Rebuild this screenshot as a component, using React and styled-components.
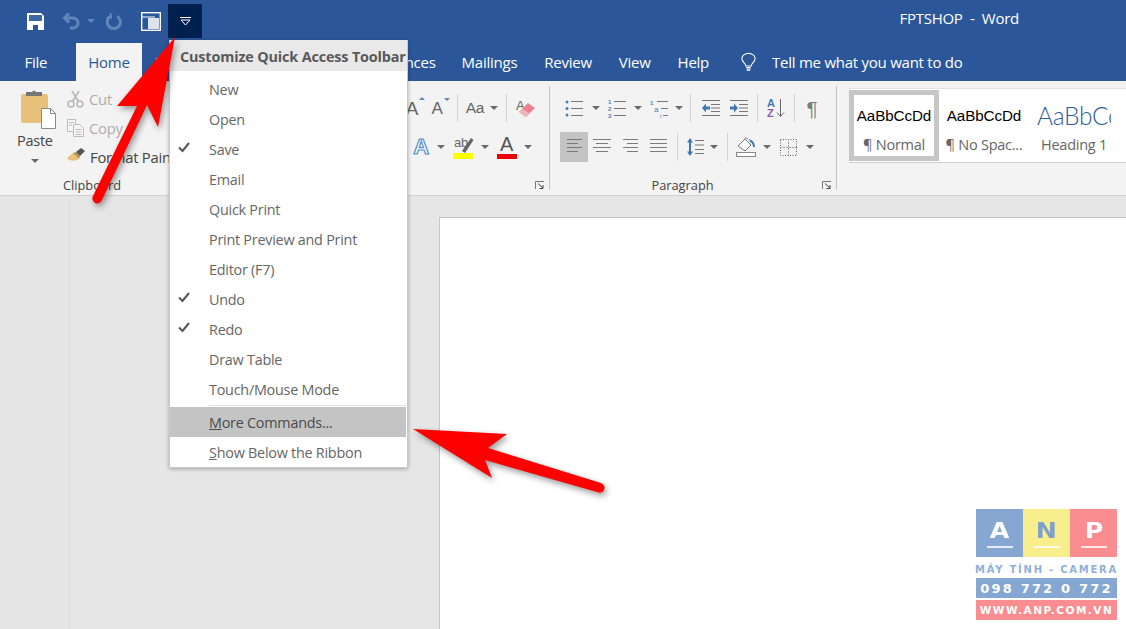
import React from 'react';
import styled, { createGlobalStyle } from 'styled-components';

const GlobalStyle = createGlobalStyle`
  html, body { margin: 0; padding: 0; background: #e6e6e6; }
  * { box-sizing: border-box; }
`;

const blue = '#2b579a';
const font = `"Open Sans", "Noto Sans", sans-serif`;

const Frame = styled.div`
  position: relative;
  width: 1126px;
  height: 629px;
  overflow: hidden;
  display: flex;
  flex-direction: column;
  font-family: ${font};
  letter-spacing: -0.25px;
  color: #555;
`;

const TitleBar = styled.div`
  height: 42px;
  flex: none;
  background: ${blue};
  display: flex;
  align-items: flex-start;
  padding: 4px 0 0 16px;
`;

const QatButton = styled.div`
  height: 34px;
  width: ${p => p.$w}px;
  display: flex;
  align-items: center;
  justify-content: center;
  background: ${p => (p.$active ? '#002050' : 'transparent')};
`;

const QatCaret = styled.i`
  display: block;
  border-left: 4px solid transparent;
  border-right: 4px solid transparent;
  border-top: 4px solid #6485b8;
`;

const DocTitle = styled.div`
  margin-left: auto;
  margin-right: 107px;
  margin-top: 4px;
  color: #fff;
  font-size: 15px;
  white-space: pre;
`;

const TabBar = styled.div`
  height: 39px;
  flex: none;
  background: ${blue};
  display: flex;
  align-items: stretch;
  padding-left: 11px;
`;

const Tab = styled.div`
  padding: 0 ${p => p.$pad || 13.5}px;
  margin-left: ${p => p.$ml || 0}px;
  margin-top: ${p => (p.$active ? 1 : 0)}px;
  display: flex;
  align-items: center;
  font-size: 15px;
  color: ${p => (p.$active ? blue : '#fff')};
  background: ${p => (p.$active ? '#f3f3f3' : 'transparent')};
`;

const TellMe = styled.div`
  margin-left: 18.5px;
  display: flex;
  align-items: center;
  gap: 16px;
  color: #fff;
  font-size: 15px;
`;

const Ribbon = styled.div`
  height: 115px;
  flex: none;
  background: #f3f3f3;
  border-bottom: 1px solid #d2d2d2;
  display: flex;
`;

const Group = styled.div`
  width: ${p => p.$w}px;
  flex: none;
  display: flex;
  flex-direction: column;
`;

const GroupBody = styled.div`
  height: 94px;
  display: flex;
  flex-direction: ${p => (p.$rows ? 'column' : 'row')};
  align-items: ${p => (p.$end ? 'flex-end' : 'flex-start')};
  padding: ${p => p.$pad || '0'};
  gap: ${p => (p.$rows ? '9px' : '0')};
`;

const GroupFooter = styled.div`
  height: 20px;
  display: grid;
  grid-template-columns: 1fr auto 1fr;
  align-items: center;
  font-size: 12.8px;
  color: #444;
  letter-spacing: 0;
  padding-right: 4px;
`;

const GroupLabel = styled.span`
  grid-column: 2;
  margin-left: ${p => p.$ml || 0}px;
  margin-right: ${p => p.$mr || 0}px;
`;

const Launcher = styled.div`
  grid-column: 3;
  justify-self: end;
  display: flex;
`;

const GroupRule = styled.div`
  width: 1px;
  flex: none;
  height: 104px;
  margin-top: 5px;
  background: #c6c6c6;
`;

const PasteButton = styled.div`
  width: 56px;
  padding: 8px 0 0 21px;
  display: flex;
  flex-direction: column;
  align-items: flex-start;
  font-size: 14.5px;
  color: #444;
`;

const PasteLabel = styled.div`
  margin: 2px 0 8px -4px;
  line-height: 20px;
`;

const PasteCaret = styled.div`
  margin-left: 10px;
`;

const SmallColumn = styled.div`
  padding-top: 3px;
  padding-left: 11px;
  display: flex;
  flex-direction: column;
`;

const SmallItem = styled.div`
  height: 29px;
  display: flex;
  align-items: center;
  gap: 5px;
  white-space: nowrap;
  font-size: 14.8px;
  color: ${p => (p.$off ? '#adadad' : '#444')};
`;

const ToolRow = styled.div`
  height: 30px;
  display: flex;
  align-items: center;
`;

const Cell = styled.div`
  width: ${p => p.$w}px;
  height: 30px;
  flex: none;
  display: flex;
  align-items: center;
  justify-content: center;
  background: ${p => (p.$active ? '#c4c4c4' : 'transparent')};
`;

const Caret = styled.i`
  display: block;
  width: 0;
  height: 0;
  border-left: 4px solid transparent;
  border-right: 4px solid transparent;
  border-top: 4px solid #6a6a6a;
`;

const Rule = styled.div`
  width: 1px;
  height: ${p => p.$h || 28}px;
  flex: none;
  background: #d2d2d2;
`;

const Spacer = styled.div`
  width: ${p => p.$w}px;
  flex: none;
  display: flex;
  justify-content: center;
`;

const LetterBox = styled.div`
  position: relative;
  font-family: "Liberation Sans", sans-serif;
  font-size: ${p => p.$size || 18}px;
  color: #666;
  line-height: 1;
`;

const GrowMark = styled.span`
  position: absolute;
  top: -2px;
  right: -7px;
  width: 0;
  height: 0;
  border-left: 3.5px solid transparent;
  border-right: 3.5px solid transparent;
  ${p => (p.$down
    ? 'border-top: 3.5px solid #5b87b5;'
    : 'border-bottom: 3.5px solid #5b87b5;')}
`;

const EffectA = styled.div`
  font-family: "Liberation Sans", sans-serif;
  font-size: 22px;
  font-weight: 700;
  color: #fff;
  -webkit-text-stroke: 1.2px #4f8fca;
  line-height: 1;
`;

const ColorA = styled.div`
  display: flex;
  flex-direction: column;
  align-items: center;
  font-family: "Liberation Sans", sans-serif;
  font-size: 20px;
  color: #555;
  line-height: 17px;
`;

const ColorBar = styled.div`
  width: ${p => p.$w || 20}px;
  height: 5px;
  margin-top: 1px;
  background: ${p => p.$c};
`;

const Pilcrow = styled.div`
  font-family: "Liberation Sans", sans-serif;
  font-size: 21px;
  color: #7d7d7d;
  line-height: 1;
`;

const Gallery = styled.div`
  margin: 7px 0 0 12px;
  flex: 1;
  height: 75px;
  background: #fff;
  border-top: 1px solid #e2e2e2;
  border-bottom: 1px solid #cfcfcf;
  display: flex;
  overflow: hidden;
`;

const StyleCard = styled.div`
  width: 90px;
  height: 71px;
  margin-top: 1px;
  flex: none;
  display: flex;
  flex-direction: column;
  align-items: center;
  border: 5px solid ${p => (p.$selected ? '#c6c6c6' : 'transparent')};
`;

const StyleSample = styled.div`
  height: 36px;
  margin: 2px 0 2px;
  display: flex;
  align-items: center;
  width: 100%;
  justify-content: center;
  white-space: nowrap;
  overflow: hidden;
  font-family: ${p => (p.$big ? 'Lato, sans-serif' : '"Liberation Sans", sans-serif')};
  font-weight: ${p => (p.$big ? 300 : 400)};
  font-size: ${p => (p.$big ? 24.5 : 15.2)}px;
  color: ${p => (p.$big ? '#2f5c9a' : '#000')};
  letter-spacing: ${p => (p.$big ? '-0.3px' : '-0.1px')};
`;

const HeadingClip = styled.span`
  display: block;
  width: 74px;
  overflow: hidden;
`;

const StyleName = styled.div`
  font-size: 14.5px;
  line-height: 20px;
  color: #666;
  white-space: nowrap;
`;

const Workspace = styled.div`
  flex: 1;
  display: flex;
  background: #e6e6e6;
`;

const LeftStrip = styled.div`
  width: 70px;
  flex: none;
  background: #e5e5e5;
  border-right: 1px solid #dfdfdf;
`;

const Page = styled.div`
  flex: 1;
  margin: 21px 0 0 369px;
  background: #fff;
  border-left: 1px solid #c6c6c6;
  border-top: 1px solid #c6c6c6;
`;

const Menu = styled.div`
  position: absolute;
  left: 169px;
  top: 40px;
  width: 239px;
  height: 428px;
  background: #fff;
  border: 1px solid #c8c8c8;
  border-top: 0;
  box-shadow: 0 1px 4px rgba(0, 0, 0, 0.3);
`;

const MenuHeader = styled.div`
  height: 31px;
  margin-bottom: 4px;
  padding: 2px 0 0 10px;
  display: flex;
  align-items: center;
  background: #e9e9e9;
  font-size: 14.4px;
  font-weight: 700;
  color: #595959;
  white-space: nowrap;
  letter-spacing: -0.15px;
`;

const MenuItem = styled.div`
  height: 30px;
  margin-right: 1px;
  padding-bottom: ${p => (p.$low ? 0 : 2)}px;
  display: flex;
  align-items: center;
  font-size: 14.4px;
  white-space: nowrap;
  color: ${p => (p.$hot ? '#4a4a4a' : '#666')};
  background: ${p => (p.$hot ? '#c4c4c4' : 'transparent')};
`;

const CheckSlot = styled.div`
  width: 39px;
  flex: none;
  padding: 0 0 3px 8px;
  display: flex;
`;

const MenuRule = styled.div`
  height: 1px;
  margin: 0 1px 1px 39px;
  background: #e2e2e2;
`;

const ArrowLayer = styled.svg`
  position: absolute;
  left: 0;
  top: 0;
  pointer-events: none;
  filter: drop-shadow(2px 3px 3px rgba(0, 0, 0, 0.4));
`;

const Watermark = styled.div`
  position: absolute;
  left: 976px;
  top: 509px;
  width: 141px;
  display: flex;
  flex-direction: column;
  font-family: "DejaVu Sans", sans-serif;
  font-weight: 700;
`;

const Tiles = styled.div`
  display: flex;
  height: 48px;
`;

const Tile = styled.div`
  flex: 1;
  display: flex;
  flex-direction: column;
  align-items: center;
  justify-content: flex-end;
  padding-bottom: 9px;
  background: ${p => p.$bg};
  color: ${p => p.$c};
  font-size: 22px;
  line-height: 24px;
  &::after {
    content: '';
    width: 26px;
    height: 2px;
    margin-top: 3px;
    background: #fff;
    opacity: 0.8;
  }
`;

const TileLetter = styled.span`
  display: block;
  transform: scaleX(1.15);
`;

const Tagline = styled.div`
  height: 21px;
  padding-top: 3px;
  display: flex;
  align-items: center;
  justify-content: center;
  font-size: 10px;
  letter-spacing: 1.75px;
  color: #8fb0d8;
  white-space: nowrap;
`;

const Strip = styled.div`
  height: ${p => p.$h}px;
  margin-bottom: 2px;
  display: flex;
  align-items: center;
  justify-content: center;
  background: ${p => p.$bg};
  color: #fff;
  white-space: nowrap;
  font-size: ${p => p.$size}px;
  letter-spacing: ${p => p.$sp}px;
`;

const SaveIcon = () => (
  <svg width="17" height="17" viewBox="0 0 17 17">
    <path d="M0 0h14l3 3v14H0z" fill="#fff" />
    <rect x="2" y="2" width="13" height="6" fill="#3d67a6" />
    <rect x="6" y="12" width="5" height="5" fill="#2b579a" />
  </svg>
);

const UndoIcon = () => (
  <svg width="18" height="18" viewBox="0 0 18 18" fill="none" stroke="#6485b8" strokeWidth="3">
    <path d="M7 1.5 2.5 6 7 10.5" />
    <path d="M3 6h8a4.7 4.7 0 0 1 0 10H8" />
  </svg>
);

const RedoIcon = () => (
  <svg width="17" height="17" viewBox="0 0 17 17" fill="none" stroke="#6485b8" strokeWidth="3">
    <path d="M11 3.2A6.6 6.6 0 1 1 5 3" />
    <path d="M4.5 0 5 4.5 0.5 5" strokeWidth="2" />
  </svg>
);

const ViewIcon = () => (
  <svg width="20" height="19" viewBox="0 0 20 19" fill="none">
    <rect x="0.7" y="0.7" width="18.6" height="17.6" stroke="#fff" strokeWidth="1.4" />
    <path d="M1 5h13" stroke="#fff" />
    <rect x="7" y="6" width="11" height="11" fill="#dde3ee" />
  </svg>
);

const CustomizeIcon = () => (
  <svg width="11" height="9" viewBox="0 0 11 9" fill="none" stroke="#fff">
    <path d="M0 .5h11" />
    <path d="M1 3h9L5.500 8z" />
  </svg>
);

const BulbIcon = () => (
  <svg width="15" height="20" viewBox="0 0 17 21" fill="none" stroke="#fff" strokeWidth="1.2">
    <path d="M5.5 15c0-3-4.500-4.500-4.500-8.500a7.500 5.800 0 0 1 15 0c0 4-4.500 5.500-4.500 8.500z" />
    <path d="M6 17h5M6.500 19.500h4" strokeWidth="1.600" />
  </svg>
);

const PasteIcon = () => (
  <svg width="36" height="40" viewBox="0 0 36 40">
    <rect x="0" y="5" width="27" height="29" rx="2" fill="#e8c27a" />
    <path d="M5 7V3h6q2-3 4 0h6v4z" fill="#777" />
    <path d="M20.500 19.500h9l5 5v15h-14z" fill="#fff" stroke="#8a8a8a" />
    <path d="M29.500 19.500v5h5" fill="none" stroke="#8a8a8a" />
  </svg>
);

const CutIcon = () => (
  <svg width="17" height="18" viewBox="0 0 17 18" fill="none" stroke="#b9b9b9" strokeWidth="1.600">
    <circle cx="4" cy="14" r="3" />
    <circle cx="13" cy="14" r="3" />
    <path d="M5.500 11.500 12 1M11.500 11.500 5 1" />
  </svg>
);

const CopyIcon = () => (
  <svg width="17" height="18" viewBox="0 0 17 18" fill="#f6f6f6" stroke="#bcbcbc">
    <path d="M.5.500h8v12h-8z" />
    <path d="M6.500 5.500h6l4 4v8h-10z" />
    <path d="M2 3.500h5M2 6h3M8.500 10.500h6M8.500 13h6M8.500 15.500h6" fill="none" />
  </svg>
);

const BrushIcon = () => (
  <svg width="18" height="17" viewBox="0 0 18 17">
    <path d="M0 10 6 5l6 6c-3 2-9 3-12-1z" fill="#e8c27a" />
    <path d="M6 5l3-1 4 4-1 3z" fill="#b89048" />
    <path d="M9 4l5-4 4 3-5 5z" fill="#555" />
  </svg>
);

const LauncherIcon = () => (
  <svg width="10" height="9" viewBox="0 0 10 9" fill="none" stroke="#777">
    <path d="M.5 8V.5H9" />
    <path d="M3 2.500 8 7M8 4v3.500H4.500" stroke="#444" />
  </svg>
);

const EraserIcon = () => (
  <svg width="20" height="20" viewBox="0 0 20 20">
    <text x="0" y="12" fontFamily="Liberation Sans, sans-serif" fontSize="13" fill="#666">A</text>
    <path d="M3 14 12 5l7 5-9 9z" fill="#e98392" />
    <path d="M3 14l3.500-3.500 7 5L10 19z" fill="#f1b3bb" />
  </svg>
);

const HighlightIcon = () => (
  <svg width="21" height="26" viewBox="0 0 21 26">
    <text x="1" y="13" fontFamily="Liberation Sans, sans-serif" fontSize="13" fill="#666">ab</text>
    <path d="M9 17 18 4l2.500 2L12 19z" fill="#666" />
    <rect x="0" y="19" width="20" height="6" fill="#ffff00" />
  </svg>
);

const Lines = ({ w = 18, rows, color = '#7a7a7a' }) => (
  <svg width={w} height={rows.length * 4 + 1} viewBox={`0 0 ${w} ${rows.length * 4 + 1}`} stroke={color}>
    {rows.map(([a, b], i) => (
      <path key={i} d={`M${a} ${i * 4 + 0.5}H${b}`} />
    ))}
  </svg>
);

const BulletIcon = () => (
  <svg width="18" height="19" viewBox="0 0 18 19">
    <g fill="#4d7fae">
      <circle cx="2" cy="3" r="1.500" />
      <circle cx="2" cy="9.500" r="1.500" />
      <circle cx="2" cy="16" r="1.500" />
    </g>
    <path d="M6 2.500h12M6 9.500h12M6 16.500h12" stroke="#777" />
  </svg>
);

const NumberIcon = () => (
  <svg width="18" height="19" viewBox="0 0 18 19">
    <g fontFamily="Liberation Sans, sans-serif" fontSize="6" fontWeight="700" fill="#4d7fae">
      <text x="0" y="5">1</text>
      <text x="0" y="12">2</text>
      <text x="0" y="18.500">3</text>
    </g>
    <path d="M6 2.500h12M6 9.500h12M6 16.500h12" stroke="#777" />
  </svg>
);

const MultiIcon = () => (
  <svg width="18" height="19" viewBox="0 0 18 19">
    <g fontFamily="Liberation Sans, sans-serif" fill="#4d7fae">
      <text x="0" y="5.500" fontSize="6" fontWeight="700">1</text>
      <text x="4" y="12.500" fontSize="8">a</text>
      <text x="10" y="18.500" fontSize="6">i</text>
    </g>
    <path d="M7 2.500h11M11 9.500h7M13 16.500h5" stroke="#777" />
  </svg>
);

const IndentIcon = ({ flip }) => (
  <svg width="18" height="16" viewBox="0 0 18 16">
    <path d="M0 .5h18M0 15.500h18M9 4.500h9M9 8h9M9 11.500h9" stroke="#777" />
    <path d={flip ? 'M0 6.500h4V3.500L8 8l-4 4.500V9.500H0z' : 'M8 6.500H4V3.500L0 8l4 4.500V9.500h4z'} fill="#3f78b0" />
  </svg>
);

const SortIcon = () => (
  <svg width="18" height="20" viewBox="0 0 18 20" fontFamily="Liberation Sans, sans-serif" fontSize="11" fontWeight="700">
    <text x="0" y="9" fill="#3f78b0">A</text>
    <text x="0" y="19" fill="#8a5aa6">Z</text>
    <path d="M13.500 1v17M10 14.500l3.500 4 3.500-4" fill="none" stroke="#666" />
  </svg>
);

const SpacingIcon = () => (
  <svg width="17" height="18" viewBox="0 0 17 18">
    <path d="M3 0l3 4.500H4v9h2L3 18l-3-4.500h2v-9H0z" fill="#3f78b0" />
    <path d="M8 2.500h9M8 7h9M8 11.500h9M8 15.500h9" stroke="#777" />
  </svg>
);

const ShadingIcon = () => (
  <svg width="20" height="20" viewBox="0 0 20 20">
    <path d="M2 9 9 2l6 6-6 6z" fill="#fff" stroke="#777" />
    <path d="M9 1.500l1-1 2 2" fill="none" stroke="#777" />
    <path d="M13 2q6 2 6 8h-2q0-4-3-5z" fill="#3f78b0" />
    <rect x="0.500" y="15.500" width="19" height="4" fill="#fff" stroke="#888" />
  </svg>
);

const BorderIcon = () => (
  <svg width="17" height="17" viewBox="0 0 17 17" fill="none" stroke="#666" strokeDasharray="1 1.500">
    <rect x="0.500" y="0.500" width="16" height="16" />
    <path d="M8.500 0v17M0 8.500h17" strokeDasharray="2 1" stroke="#999" />
  </svg>
);

const CheckIcon = () => (
  <svg width="12" height="11" viewBox="0 0 12 11" fill="none" stroke="#555" strokeWidth="2">
    <path d="M1 5.500 4.500 9 11 1" />
  </svg>
);

const FontGroup = () => (
  <Group $w={364}>
    <GroupBody $rows $end $pad="12px 4px 0 0">
      <ToolRow>
        <Cell $w={16}>
          <LetterBox $size={19}>A<GrowMark /></LetterBox>
        </Cell>
        <Cell $w={34}>
          <LetterBox $size={17}>A<GrowMark $down /></LetterBox>
        </Cell>
        <Spacer $w={7}><Rule /></Spacer>
        <Cell $w={28}><LetterBox $size={15.5}>Aa</LetterBox></Cell>
        <Cell $w={10}><Caret /></Cell>
        <Spacer $w={14}><Rule /></Spacer>
        <Cell $w={26}><EraserIcon /></Cell>
        <Spacer $w={6} />
      </ToolRow>
      <ToolRow>
        <Cell $w={26}><EffectA>A</EffectA></Cell>
        <Cell $w={14}><Caret /></Cell>
        <Cell $w={30}><HighlightIcon /></Cell>
        <Cell $w={14}><Caret /></Cell>
        <Cell $w={29}>
          <ColorA>A<ColorBar $c="#f00000" /></ColorA>
        </Cell>
        <Cell $w={14}><Caret /></Cell>
        <Spacer $w={10} />
      </ToolRow>
    </GroupBody>
    <GroupFooter>
      <Launcher><LauncherIcon /></Launcher>
    </GroupFooter>
  </Group>
);

const ParagraphGroup = () => (
  <Group $w={286}>
    <GroupBody $rows $pad="12px 0 0 10px">
      <ToolRow>
        <Cell $w={28}><BulletIcon /></Cell>
        <Cell $w={15}><Caret /></Cell>
        <Cell $w={28}><NumberIcon /></Cell>
        <Cell $w={14}><Caret /></Cell>
        <Cell $w={28}><MultiIcon /></Cell>
        <Cell $w={11}><Caret /></Cell>
        <Spacer $w={13}><Rule /></Spacer>
        <Cell $w={28}><IndentIcon /></Cell>
        <Cell $w={28}><IndentIcon flip /></Cell>
        <Spacer $w={9}><Rule /></Spacer>
        <Cell $w={28}><SortIcon /></Cell>
        <Spacer $w={8}><Rule /></Spacer>
        <Cell $w={28}><Pilcrow>¶</Pilcrow></Cell>
      </ToolRow>
      <ToolRow>
        <Cell $w={28} $active><Lines w={15} rows={[[0, 15], [0, 11], [0, 15], [0, 11]]} /></Cell>
        <Cell $w={28}><Lines rows={[[0, 18], [3, 15], [0, 18], [3, 15]]} /></Cell>
        <Cell $w={28}><Lines w={15} rows={[[0, 15], [4, 15], [0, 15], [4, 15]]} /></Cell>
        <Cell $w={28}><Lines w={17} rows={[[0, 17], [0, 17], [0, 17], [0, 17]]} /></Cell>
        <Spacer $w={10}><Rule /></Spacer>
        <Cell $w={26}><SpacingIcon /></Cell>
        <Cell $w={11}><Caret /></Cell>
        <Spacer $w={16}><Rule /></Spacer>
        <Cell $w={22}><ShadingIcon /></Cell>
        <Cell $w={20}><Caret /></Cell>
        <Cell $w={22}><BorderIcon /></Cell>
        <Cell $w={22}><Caret /></Cell>
      </ToolRow>
    </GroupBody>
    <GroupFooter>
      <GroupLabel $mr={17}>Paragraph</GroupLabel>
      <Launcher><LauncherIcon /></Launcher>
    </GroupFooter>
  </Group>
);

const menuItems = [
  ['New'], ['Open'], ['Save', true], ['Email'], ['Quick Print'],
  ['Print Preview and Print'], ['Editor (F7)'], ['Undo', true], ['Redo', true],
  ['Draw Table'], ['Touch/Mouse Mode'],
];

const QuickMenu = () => (
  <Menu>
    <MenuHeader>Customize Quick Access Toolbar</MenuHeader>
    {menuItems.map(([label, checked]) => (
      <MenuItem key={label}>
        <CheckSlot>{checked && <CheckIcon />}</CheckSlot>
        {label}
      </MenuItem>
    ))}
    <MenuRule />
    <MenuItem $hot $low>
      <CheckSlot />
      <span><u>M</u>ore Commands...</span>
    </MenuItem>
    <MenuItem $low>
      <CheckSlot />
      <span><u>S</u>how Below the Ribbon</span>
    </MenuItem>
  </Menu>
);

export default function App() {
  return (
    <Frame>
      <GlobalStyle />
      <TitleBar>
        <QatButton $w={39}><SaveIcon /></QatButton>
        <QatButton $w={32}><UndoIcon /></QatButton>
        <QatButton $w={8}><QatCaret /></QatButton>
        <QatButton $w={39}><RedoIcon /></QatButton>
        <QatButton $w={34}><ViewIcon /></QatButton>
        <QatButton $w={34} $active><CustomizeIcon /></QatButton>
        <DocTitle>FPTSHOP  -  Word</DocTitle>
      </TitleBar>
      <TabBar>
        <Tab>File</Tab>
        <Tab $active $ml={15} $pad={12.5}>Home</Tab>
        <Tab $pad={12.5}>Insert</Tab>
        <Tab $pad={12.5}>Design</Tab>
        <Tab $pad={12.5}>Layout</Tab>
        <Tab $pad={12.5}>References</Tab>
        <Tab>Mailings</Tab>
        <Tab>Review</Tab>
        <Tab>View</Tab>
        <Tab>Help</Tab>
        <TellMe><BulbIcon />Tell me what you want to do</TellMe>
      </TabBar>
      <Ribbon>
        <Group $w={185}>
          <GroupBody>
            <PasteButton>
              <PasteIcon />
              <PasteLabel>Paste</PasteLabel>
              <PasteCaret><Caret /></PasteCaret>
            </PasteButton>
            <SmallColumn>
              <SmallItem $off><CutIcon />Cut</SmallItem>
              <SmallItem $off><CopyIcon />Copy</SmallItem>
              <SmallItem><BrushIcon />Format Painter</SmallItem>
            </SmallColumn>
          </GroupBody>
          <GroupFooter>
            <GroupLabel $ml={3}>Clipboard</GroupLabel>
          </GroupFooter>
        </Group>
        <FontGroup />
        <GroupRule />
        <ParagraphGroup />
        <GroupRule />
        <Gallery>
          <StyleCard $selected>
            <StyleSample>AaBbCcDd</StyleSample>
            <StyleName>¶ Normal</StyleName>
          </StyleCard>
          <StyleCard>
            <StyleSample>AaBbCcDd</StyleSample>
            <StyleName>¶ No Spac...</StyleName>
          </StyleCard>
          <StyleCard>
            <StyleSample $big><HeadingClip>AaBbCc</HeadingClip></StyleSample>
            <StyleName>Heading 1</StyleName>
          </StyleCard>
        </Gallery>
      </Ribbon>
      <Workspace>
        <LeftStrip />
        <Page />
      </Workspace>
      <QuickMenu />
      <ArrowLayer width="1126" height="629" viewBox="0 0 1126 629">
        <path
          d="M175 37 158 127 147 105 102 200Q99 205 95 203 91 200 93 196L137 106 117 106Z"
          fill="#fe0000"
        />
        <path
          d="M413 429 507 434 488 448 601 483Q606 486 604 490 602 494 597 492L485 460 492 478Z"
          fill="#fe0000"
        />
      </ArrowLayer>
      <Watermark>
        <Tiles>
          <Tile $bg="#85a7d2" $c="#fff"><TileLetter>A</TileLetter></Tile>
          <Tile $bg="#f8ef8c" $c="#7f9fcc"><TileLetter>N</TileLetter></Tile>
          <Tile $bg="#f98d90" $c="#fff"><TileLetter>P</TileLetter></Tile>
        </Tiles>
        <Tagline>MÁY TÍNH - CAMERA</Tagline>
        <Strip $h={20} $bg="#85a7d2" $size={13} $sp={2.2}>098 772 0 772</Strip>
        <Strip $h={20} $bg="#f98d90" $size={10.5} $sp={1.5}>WWW.ANP.COM.VN</Strip>
      </Watermark>
    </Frame>
  );
}
